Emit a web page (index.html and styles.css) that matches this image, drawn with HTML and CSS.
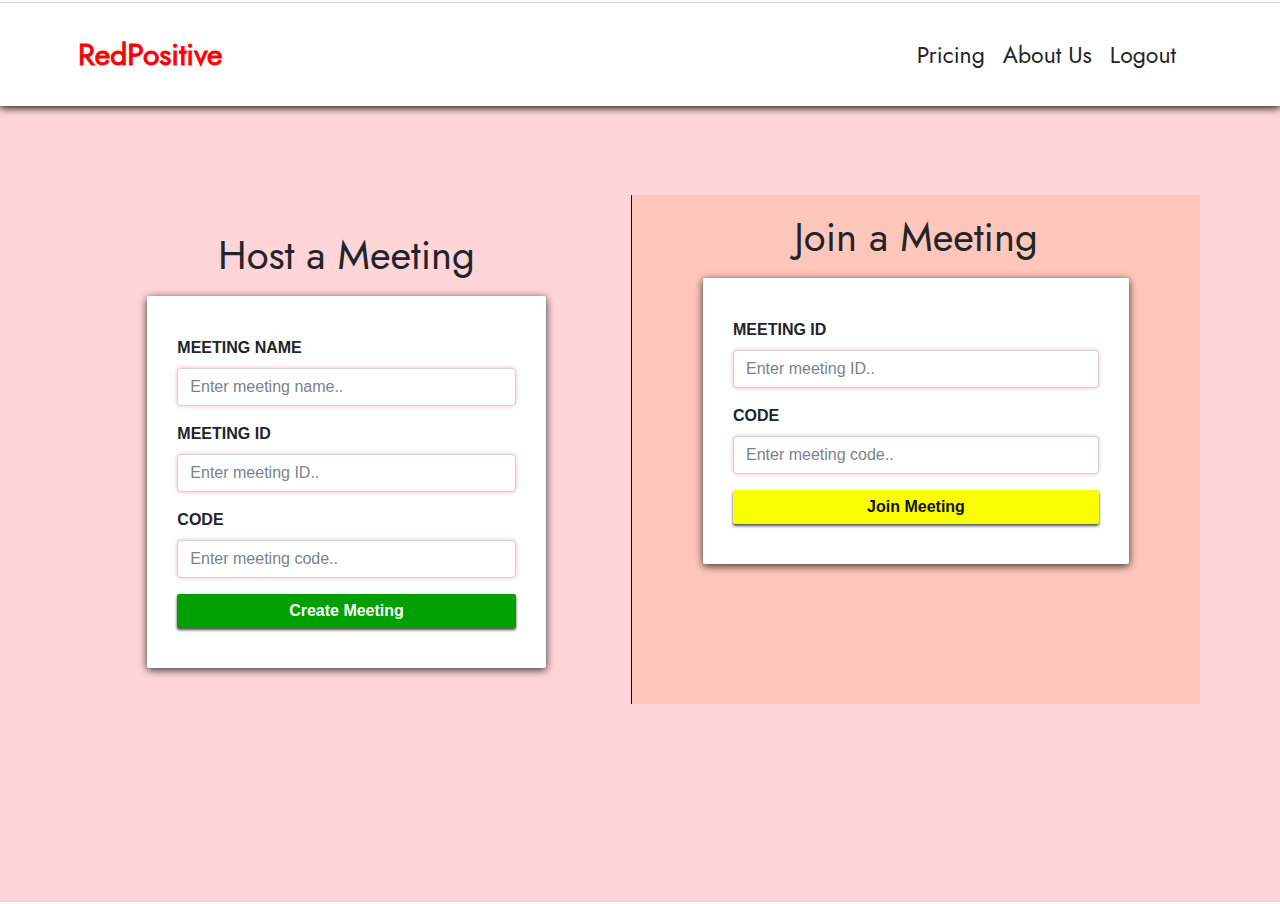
FILE: index.html
```html
<!DOCTYPE html>
<html lang="en">
<head>
<meta charset="utf-8">
<meta name="viewport" content="width=device-width, initial-scale=1">
<title>RedPositive</title>
<link rel="stylesheet" href="styles.css">
</head>
<body>
<div class="page">
  <header class="navbar">
    <a class="brand" href="#">RedPositive</a>
    <nav class="nav-links">
      <a href="#">Pricing</a>
      <a href="#">About Us</a>
      <a href="#">Logout</a>
    </nav>
  </header>
  <main class="meetings">
    <section class="panel panel-host">
      <h1 class="panel-title">Host a Meeting</h1>
      <form class="card">
        <div class="field">
          <label for="host-name">MEETING NAME</label>
          <input id="host-name" type="text" placeholder="Enter meeting name..">
        </div>
        <div class="field">
          <label for="host-id">MEETING ID</label>
          <input id="host-id" type="text" placeholder="Enter meeting ID..">
        </div>
        <div class="field">
          <label for="host-code">CODE</label>
          <input id="host-code" type="text" placeholder="Enter meeting code..">
        </div>
        <button class="button button-create" type="button">Create Meeting</button>
      </form>
    </section>
    <section class="panel panel-join">
      <h1 class="panel-title">Join a Meeting</h1>
      <form class="card">
        <div class="field">
          <label for="join-id">MEETING ID</label>
          <input id="join-id" type="text" placeholder="Enter meeting ID..">
        </div>
        <div class="field">
          <label for="join-code">CODE</label>
          <input id="join-code" type="text" placeholder="Enter meeting code..">
        </div>
        <button class="button button-join" type="button">Join Meeting</button>
      </form>
    </section>
  </main>
</div>
</body>
</html>
```
FILE: styles.css
```css
* {
  box-sizing: border-box;
}

body {
  margin: 0;
  padding: 2px 0;
  min-height: 100vh;
  display: flex;
  flex-direction: column;
  background: #fff;
  color: #212529;
  font-family: "Liberation Sans", Arial, sans-serif;
  font-size: 16px;
  line-height: 24px;
}

.page {
  flex: 1;
  overflow: hidden;
  border-top: 1px solid #d9d9d9;
  border-bottom: 1px solid #d9d9d9;
  background: #ffd5da;
}

.navbar {
  display: flex;
  align-items: center;
  justify-content: space-between;
  padding: 32px 104px 32px 78px;
  background: #fff;
  box-shadow: 0 2px 8px rgba(0, 0, 0, 0.9);
  font-family: Jost, Lato, sans-serif;
}

.brand {
  color: #ff0000;
  font-size: 30px;
  font-weight: 400;
  line-height: 39px;
  text-decoration: none;
  -webkit-text-stroke: 1px #ff0000;
}

.nav-links {
  display: flex;
  gap: 18px;
}

.nav-links a {
  color: #212529;
  font-size: 23px;
  text-decoration: none;
}

.meetings {
  display: grid;
  grid-template-columns: 1fr 1fr;
  padding: 89px 80px 89px 62px;
}

.panel {
  display: flex;
  flex-direction: column;
  align-items: center;
}

.panel-host {
  padding: 36px 0;
}

.panel-join {
  padding: 18px 0;
  border-left: 1px solid #000;
  background: #ffc7bb;
}

.panel-title {
  margin: 0;
  padding: 0 0 17px;
  font-family: Jost, Lato, sans-serif;
  font-size: 40px;
  font-weight: 400;
  line-height: 48px;
}

.card {
  width: 70%;
  padding: 40px 30px;
  border-radius: 2px;
  background: #fff;
  box-shadow: 0 2px 8px rgba(0, 0, 0, 0.8);
}

.panel-join .card {
  width: 75%;
}

.field {
  display: flex;
  flex-direction: column;
  gap: 8px;
  margin-bottom: 16px;
}

.field label {
  font-weight: 700;
}

.field input {
  width: 100%;
  height: 38px;
  padding: 6px 12px;
  border: 1px solid #ced4da;
  border-radius: 4px;
  background: #fff;
  box-shadow: 0 0 4px #ffb6c1;
  color: #495057;
  font: inherit;
}

.field input::placeholder {
  color: #7b838a;
  opacity: 1;
}

.button {
  display: block;
  width: 100%;
  height: 34px;
  padding: 0;
  border: 0;
  border-radius: 2px;
  box-shadow: 0 2px 3px rgba(0, 0, 0, 0.7);
  font: inherit;
  font-weight: 700;
}

.button-create {
  background: #00a000;
  color: #fff;
}

.button-join {
  background: #faff00;
  color: #111;
}
```
